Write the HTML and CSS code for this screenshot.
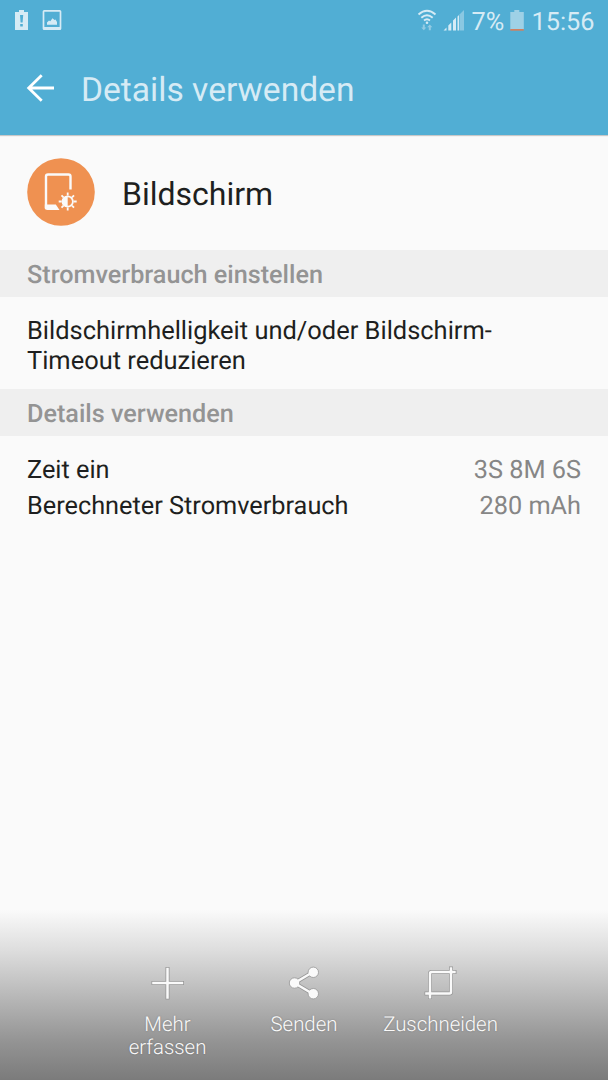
FILE: index.html
```html
<!DOCTYPE html>
<html lang="de">
<head>
    <meta charset="UTF-8">
    <meta name="viewport" content="width=device-width, initial-scale=1.0">
    <title>Details verwenden</title>
    <link rel="stylesheet" href="styles.css">
</head>
<body>
    <header>
        <div class="status-bar">
            <svg class="status-left" width="62" height="42" viewBox="0 0 62 42">
                <path d="M15 12h4v-2h5v2h4v18H15z" fill="#d6ebf5"/>
                <path d="M20 15h3.200l-.6 7.500h-2zM20.200 24h2.600v2.600h-2.600z" fill="#51aed4"/>
                <path d="M43.500 11.500q0-.7.700-.7h15.600q.7 0 .7.700v17q0 .7-.7.700H44.200q-.7 0-.7-.7z" fill="none" stroke="#d6ebf5" stroke-width="1.700"/>
                <path d="M43.500 27h17v2.500h-17z" fill="#d6ebf5"/>
                <path d="M47 24.700v-2.200l2-2 1.300.8 2.200-3 2 1.700 1-.5 1.500 2.500v2.700z" fill="#d6ebf5"/>
            </svg>
            <div class="status-right">
                <svg width="50" height="42" viewBox="415 0 50 42">
                    <g fill="none" stroke="#d6ebf5" stroke-width="1.900">
                        <path d="M417.500 14.500q8.500-7.500 17 0M420.300 17.700q5.700-5 11.400 0M423 20.600q3-2.500 6 0"/>
                    </g>
                    <circle cx="426" cy="22.700" r="1.300" fill="#d6ebf5"/>
                    <path d="M421.800 24.500h2v3h1.600l-2.600 2.700-2.600-2.700h1.600zM427.800 30.200h2v-3h1.600l-2.600-2.700-2.600 2.700h1.600z" fill="#93cbe3"/>
                    <path d="M442.500 30.500l3-3v3zM447.300 25.500l3-3v8h-3zM452 20.500l3-3v13h-3zM456.500 16.500l1.500-1.500v15.500h-1.500z" fill="#d6ebf5"/>
                    <path d="M458.500 14.500l4.500-4.500v20.500h-4.500z" fill="#8ac8e2"/>
                </svg>
                <span class="percent">7%</span>
                <svg width="16" height="42" viewBox="508 0 16 42">
                    <path d="M509.300 12h4v-2h5v2h4.500v17.500h-13.500z" fill="#9ed1e6"/>
                    <path d="M509.300 29h13.500v1.700h-13.500z" fill="#d3805f"/>
                </svg>
                <span class="clock">15:56</span>
            </div>
        </div>
        <div class="title-bar">
            <svg class="back" width="28" height="28" viewBox="0 0 28 28">
                <path d="M15.700 1.300L2.700 14l13 12.700M2.700 14H28" fill="none" stroke="#fff" stroke-width="2.800"/>
            </svg>
            <h1>Details verwenden</h1>
        </div>
    </header>

    <main>
        <section class="app">
            <svg class="app-icon" width="68" height="68" viewBox="0 0 68 68">
                <circle cx="34" cy="34" r="33.800" fill="#ef9151"/>
                <path d="M43.500 31.500V18.500q0-2-2-2H21q-2 0-2 2v32" fill="none" stroke="#fafafa" stroke-width="2.400"/>
                <path d="M17.800 46.500h11l3.700 5.500H20.500q-2.700 0-2.700-2.500z" fill="#fafafa"/>
                <circle cx="40.700" cy="43.500" r="5.200" fill="none" stroke="#fafafa" stroke-width="1.800"/>
                <path d="M40.700 38a5.500 5.500 0 0 0 0 11z" fill="#fafafa"/>
                <path d="M40.700 34.500v3M40.700 49.500v3M31.700 43.500h3M46.700 43.500h3M34.500 37.300l2 2M45 47.700l2 2M34.500 49.700l2-2M45 39.300l2-2" stroke="#fafafa" stroke-width="1.800"/>
            </svg>
            <h2>Bildschirm</h2>
        </section>

        <h3>Stromverbrauch einstellen</h3>
        <p class="hint">Bildschirmhelligkeit und/oder Bildschirm-<br>Timeout reduzieren</p>

        <h3>Details verwenden</h3>
        <dl class="details">
            <div class="row">
                <dt>Zeit ein</dt>
                <dd>3S 8M 6S</dd>
            </div>
            <div class="row">
                <dt>Berechneter Stromverbrauch</dt>
                <dd>280 mAh</dd>
            </div>
        </dl>
    </main>

    <!-- Screenshot-Leiste -->
    <footer>
        <div class="action">
            <svg width="36" height="36" viewBox="0 0 36 36">
                <path class="outline" d="M17.500 2v32.500M1.500 18H34"/>
                <path class="line" d="M17.500 2.700v31M2.200 18h31"/>
            </svg>
            <span>Mehr<br>erfassen</span>
        </div>
        <div class="action">
            <svg width="36" height="36" viewBox="0 0 36 36">
                <path class="outline" d="M27 7L8.500 18 27 29"/>
                <g fill="#fafafa" stroke="#969696" stroke-width=".8">
                    <circle cx="27.300" cy="7.300" r="5.200"/>
                    <circle cx="8.500" cy="18" r="5.200"/>
                    <circle cx="27.300" cy="28.700" r="5.200"/>
                </g>
                <path class="line" d="M27 7L8.500 18 27 29"/>
            </svg>
            <span>Senden</span>
        </div>
        <div class="action">
            <svg width="36" height="36" viewBox="0 0 36 36">
                <path class="outline" d="M33.500 7H8.500q-1.500 0-1.500 1.500V34M1.500 28.500h25q1.500 0 1.500-1.500V1.500"/>
                <path class="line" d="M32.700 7H8.500q-1.500 0-1.500 1.500v25M2.200 28.500h24.300q1.500 0 1.500-1.500V2.200"/>
            </svg>
            <span>Zuschneiden</span>
        </div>
    </footer>
</body>
</html>
```

FILE: styles.css
```css
* {
    margin: 0;
    padding: 0;
    box-sizing: border-box;
}

body {
    display: flex;
    flex-direction: column;
    height: 1080px;
    overflow: hidden;
    background-color: #fafafa;
    color: #1e1f20;
    font-family: Roboto, sans-serif;
    font-size: 25.3px;
    text-rendering: geometricPrecision;
}

svg {
    display: block;
    flex-shrink: 0;
}

header {
    height: 135px;
    background-color: #51aed4;
    box-shadow: 0 1px 1px rgba(0, 0, 0, 0.2);
    color: #d6ebf5;
}

.status-bar {
    display: flex;
    justify-content: space-between;
    height: 42px;
    padding-right: 13.5px;
    font-size: 25.3px;
    line-height: 46px;
}

.status-right {
    display: flex;
}

.percent {
    width: 37px;
    margin-left: 6px;
    white-space: nowrap;
}

.clock {
    margin-left: 7px;
}

.title-bar {
    display: flex;
    align-items: center;
    height: 92px;
    padding-left: 26px;
}

h1 {
    margin: 5px 0 0 27px;
    font-size: 33.6px;
    font-weight: 400;
    line-height: 40px;
}

.app {
    display: flex;
    align-items: center;
    height: 115px;
    padding: 0 0 1px 27px;
}

h2 {
    margin: 4px 0 0 27px;
    font-size: 32px;
    font-weight: 400;
}

h3 {
    height: 47px;
    padding-left: 27px;
    background-color: #efefef;
    color: #949494;
    font-size: 25.2px;
    font-weight: 500;
    line-height: 52px;
}

.hint {
    height: 92px;
    padding: 19px 27px 0;
    font-size: 25.45px;
    line-height: 30px;
}

.details {
    padding: 17px 27px;
}

.row {
    display: flex;
    justify-content: space-between;
    line-height: 36px;
}

dd {
    color: #868686;
}

footer {
    display: flex;
    justify-content: center;
    height: 170px;
    margin-top: auto;
    padding-top: 55px;
    background: linear-gradient(#fafafa, #dddddd 24%, #b5b5b5 53%, #949494 77%, #7b7b7b);
}

.action {
    display: flex;
    flex-direction: column;
    align-items: center;
    width: 136.5px;
    color: #fafafa;
    font-size: 20.4px;
    font-weight: 300;
    line-height: 23px;
    text-align: center;
}

.action span {
    margin-top: 12px;
    text-shadow: 0 0 2px rgba(0, 0, 0, 0.25);
}

.outline,
.line {
    fill: none;
    stroke: #969696;
    stroke-width: 4px;
}

.line {
    stroke: #fafafa;
    stroke-width: 2.5px;
}
```
